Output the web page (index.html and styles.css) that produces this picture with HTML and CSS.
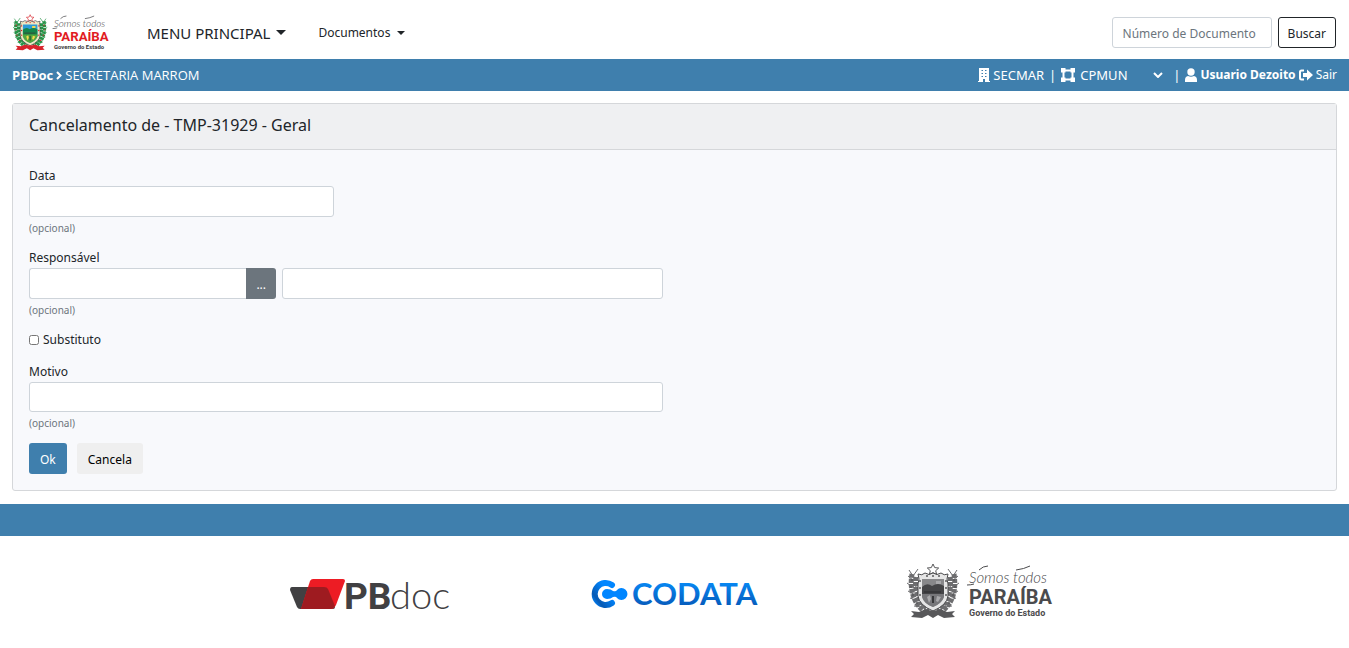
FILE: index.html
```html
<!DOCTYPE html>
<html lang="pt-BR">
<head>
  <meta charset="UTF-8">
  <title>PBDoc - Cancelamento</title>
  <meta name="viewport" content="width=device-width, initial-scale=1.0">
  <link rel="stylesheet" href="styles.css">
</head>
<body>
  <!-- shared logo drawing, coloured by the class of the svg that uses it -->
  <svg class="defs" width="0" height="0" aria-hidden="true">
    <symbol id="paraiba" viewBox="0 0 144 56" overflow="visible">
      <g class="leaf" fill="none" stroke-width="5" stroke-dasharray="4 1">
        <path d="M5 11C3 22 4 39 18 49M9 14C7 24 11 39 22 47M47 11c2 13 1 28-13 38M43 14c2 12-2 27-13 33"/>
      </g>
      <g class="leaf-line" fill="none" stroke-width="1">
        <path d="M2 7l4 6 5-7M1 13l6 5 5-5M0 20l7 5 6-5M1 28l7 4 4-5M3 35l8 3 3-6M7 43l8 1 2-6M50 7l-4 6-5-7M51 13l-6 5-5-5M52 20l-7 5-6-5M51 28l-7 4-4-5M49 35l-8 3-3-6M45 43l-8 1-2-6"/>
      </g>
      <g class="gem"><circle cx="5" cy="17" r="1"/><circle cx="4" cy="24" r="1"/><circle cx="6" cy="32" r="1"/><circle cx="10" cy="40" r="1"/><circle cx="47" cy="17" r="1"/><circle cx="48" cy="24" r="1"/><circle cx="46" cy="32" r="1"/><circle cx="42" cy="40" r="1"/></g>
      <path class="star" fill="none" stroke-width="1" d="M26 1l1.700 3.600 4 .400-3 2.700 1 3.900-3.700-2-3.700 2 1-3.900-3-2.700 4-.400z"/>
      <path class="rim" d="M11 11q4 2 7-1 4 3 8 0 4 3 8 0 3 3 7 1-2 5 0 10v12q-1 9-15 15-14-6-15-15V21q2-5 0-10z" stroke-width="1"/>
      <path class="sky" d="M15 16h22v17q-1 7-11 11-10-4-11-11z"/>
      <path class="hill" d="M15 24q5-5 10-1 6-4 12 0v11H15z"/>
      <path class="land" d="M15 31h22v3q-2 6-11 10-9-3-11-10z"/>
      <path class="sun" d="M29 18h5v3h-5zM20 34l3-2 1 4-2 4zM30 33l4 1-3 5-2-1z"/>
      <path class="dark" d="M17 28h17v2H17zM25 33h2v7h-2z"/>
      <g class="gem"><circle cx="13" cy="18" r="1"/><circle cx="13" cy="25" r="1"/><circle cx="13" cy="32" r="1"/><circle cx="39" cy="18" r="1"/><circle cx="39" cy="25" r="1"/><circle cx="39" cy="32" r="1"/><circle cx="20" cy="13" r="1"/><circle cx="26" cy="13" r="1"/><circle cx="32" cy="13" r="1"/></g>
      <path class="ribbon" d="M4 48l8 1 7-3q7 3 14 0l7 3 8-1-3 3 3 3-11 1-6-3-5 3-5-3-6 3-11-1 3-3z"/>
      <text class="logo-script" x="62" y="20">Somos todos</text>
      <path class="flourish" fill="none" d="M60 22q4 0 7-1M72 7q4-4 9-4M109 7q8-1 14-4"/>
      <text class="logo-name" x="62" y="41">PARAÍBA</text>
      <text class="logo-sub" x="62" y="53">Governo do Estado</text>
    </symbol>
  </svg>

  <nav class="navbar">
    <a href="#" class="brand"><svg class="logo logo-color" viewBox="0 0 144 56" role="img" aria-label="Governo da Paraíba"><use href="#paraiba"/></svg></a>
    <button type="button" class="menu-main">MENU PRINCIPAL<span class="caret"></span></button>
    <button type="button" class="menu-item">Documentos<span class="caret"></span></button>
    <form class="search">
      <input type="text" class="form-control" placeholder="Número de Documento" aria-label="Número de Documento">
      <button type="button" class="btn btn-outline">Buscar</button>
    </form>
  </nav>

  <div class="topbar">
    <div class="path">
      <strong>PBDoc</strong>
      <svg class="icon-angle" viewBox="0 0 6 9"><path d="M1 1l3.500 3.500L1 8" fill="none" stroke="currentColor" stroke-width="2"/></svg>
      <span>SECRETARIA MARROM</span>
    </div>
    <div class="session">
      <svg class="icon-building" viewBox="0 0 12 14"><path fill="currentColor" fill-rule="evenodd" d="M1 0h10v13h1v1H7v-3H5v3H0v-1h1zM3.500 2v1h1.500V2zm3.500 0v1h1.500V2zM3.500 5v1h1.500V5zm3.500 0v1h1.500V5zM3.500 8v1h1.500V8zm3.500 0v1h1.500V8z"/></svg>
      <span class="unit">SECMAR</span>
      <span class="bar">|</span>
      <svg class="icon-vector" viewBox="0 0 14 14"><path fill="none" stroke="currentColor" stroke-width="2" d="M2.500 2.500h9v9h-9z"/><path fill="currentColor" d="M0 0h4.500v4.500H0zM9.500 0H14v4.500H9.500zM0 9.500h4.500V14H0zM9.500 9.500H14V14H9.500z"/></svg>
      <span class="select-wrap">
        <select class="lotacao" aria-label="Lotação"><option>CPMUN</option></select>
        <svg class="icon-chevron" viewBox="0 0 10 6"><path d="M1 1l4 4 4-4" fill="none" stroke="currentColor" stroke-width="2"/></svg>
      </span>
      <span class="bar">|</span>
      <svg class="icon-user" viewBox="0 0 12 14"><circle cx="6" cy="4" r="3.700" fill="currentColor"/><path fill="currentColor" d="M3 8q3 1.500 6 0 3 .500 3 4v2H0v-2q0-3.500 3-4z"/></svg>
      <strong class="user">Usuario Dezoito</strong>
      <a href="#" class="logout"><svg class="icon-exit" viewBox="0 0 14 12"><path d="M5 1.500H2.500q-1.500 0-1.500 1.500v6q0 1.500 1.500 1.500H5" fill="none" stroke="currentColor" stroke-width="2"/><path fill="currentColor" d="M4 4h4V.500l6 5.500-6 5.500V8H4z"/></svg>Sair</a>
    </div>
  </div>

  <main class="content">
    <div class="card">
      <div class="card-header"><h5>Cancelamento de - TMP-31929 - Geral</h5></div>
      <form class="card-body">
        <div class="form-group col-3">
          <label for="data">Data</label>
          <input type="text" id="data" class="form-control">
          <small>(opcional)</small>
        </div>
        <div class="form-group col-6">
          <label for="responsavel">Responsável</label>
          <div class="person">
            <div class="input-group">
              <input type="text" id="responsavel" class="form-control">
              <button type="button" class="btn btn-secondary" aria-label="Procurar responsável">...</button>
            </div>
            <input type="text" class="form-control person-name" aria-label="Nome do responsável">
          </div>
          <small>(opcional)</small>
        </div>
        <div class="form-check col-6">
          <input type="checkbox" id="substituto">
          <label for="substituto">Substituto</label>
        </div>
        <div class="form-group col-6">
          <label for="motivo">Motivo</label>
          <input type="text" id="motivo" class="form-control reason">
          <small>(opcional)</small>
        </div>
        <div class="actions">
          <button type="button" class="btn btn-primary">Ok</button>
          <button type="button" class="btn btn-light">Cancela</button>
        </div>
      </form>
    </div>
  </main>

  <footer>
    <div class="footer-bar"></div>
    <div class="footer-logos">
      <svg class="logo-pbdoc" viewBox="0 0 162 36" role="img" aria-label="PBdoc">
        <path fill="#414042" d="M2 9h32q3 0 4 2l7 18q0 2-2 2H10q-2 0-3-2L0 12q0-3 2-3z"/>
        <path fill="#ed1c24" d="M23 1h30q2 0 2 2L46 27q-2 4-5 4H11L20 3q1-2 3-2z"/>
        <path fill="#9e1b20" d="M18 9h16q3 0 4 2l7 17q-2 3-4 3H11z"/>
        <text class="pb" x="54" y="31">PB</text>
        <text class="doc" x="100" y="31">doc</text>
      </svg>
      <svg class="logo-codata" viewBox="0 0 168 36" role="img" aria-label="CODATA">
        <defs>
          <linearGradient id="blue" x1="0" y1="0" x2="0" y2="1"><stop offset=".2" stop-color="#0789f5"/><stop offset="1" stop-color="#0650ad"/></linearGradient>
          <linearGradient id="ring" x1="1" y1="0" x2="0" y2="1"><stop offset=".3" stop-color="#0086ff"/><stop offset=".8" stop-color="#0759b3"/><stop offset="1" stop-color="#0086ff"/></linearGradient>
        </defs>
        <path d="M21 7a11 11 0 1 0 0 18" fill="none" stroke="url(#ring)" stroke-width="6" stroke-linecap="round"/>
        <path fill="#0086ff" d="M16 11q4 0 6 2 3 1 4-1a6 6 0 1 1 0 8q-1-2-4-1-2 2-6 2a5 5 0 0 1 0-10z"/>
        <text class="codata" x="41" y="27" fill="url(#blue)">CODATA</text>
      </svg>
      <svg class="logo logo-gray" viewBox="0 0 144 56" role="img" aria-label="Governo da Paraíba"><use href="#paraiba"/></svg>
    </div>
  </footer>
</body>
</html>
```

FILE: styles.css
```css
* {
  box-sizing: border-box;
}
body {
  margin: 0;
  background: #fff;
  color: #212529;
  font-family: "Noto Sans", "Open Sans", sans-serif;
  font-size: 12px;
  line-height: 20px;
}
button, input, select {
  font: inherit;
  color: inherit;
}
a {
  color: inherit;
  text-decoration: none;
}
svg {
  flex: none;
}
.defs {
  position: absolute;
}

/* navbar */
.navbar {
  display: flex;
  align-items: center;
  padding: 14px 13px 8px;
  height: 59px;
}
.brand {
  display: flex;
  margin-right: 39px;
}
.menu-main, .menu-item {
  display: flex;
  align-items: center;
  padding: 0;
  border: 0;
  background: transparent;
}
.menu-main {
  gap: 6px;
  margin-right: 32px;
  font-size: 15px;
}
.menu-item {
  gap: 7px;
}
.caret {
  border: 4px solid transparent;
  border-top-color: currentColor;
  border-bottom: 0;
}
.menu-main .caret {
  border-width: 5px 5px 0;
}
.search {
  display: flex;
  gap: 6px;
  margin-left: auto;
}
.search .form-control {
  width: 160px;
}

/* controls */
.form-control {
  width: 100%;
  height: 31px;
  padding: 5px 10px 4px;
  border: 1px solid #ced4da;
  border-radius: 3px;
  background: #fff;
}
.form-control::placeholder {
  color: #6c757d;
}
.btn {
  height: 31px;
  padding: 6px 9px 4px;
  border: 1px solid transparent;
  border-radius: 3px;
}
.btn-outline {
  border-color: #212529;
  background: #fff;
}
.btn-primary {
  background: #3f7fad;
  color: #fff;
}
.btn-light {
  background: #efefef;
  color: #000;
}
.btn-secondary {
  background: #6c757d;
  color: #fff;
}
.actions .btn {
  padding-left: 10px;
  padding-right: 10px;
}

/* blue bar */
.topbar {
  display: flex;
  align-items: center;
  justify-content: space-between;
  height: 32px;
  padding: 0 12px;
  background: #3f7fad;
  color: #fff;
  font-size: 13px;
}
.path, .session {
  display: flex;
  align-items: center;
  gap: 3px;
}
.path {
  font-family: "Open Sans", sans-serif;
}
.icon-angle {
  width: 6px;
  height: 9px;
}
.icon-building, .icon-user {
  width: 12px;
  height: 14px;
}
.icon-vector {
  width: 14px;
  height: 14px;
}
.icon-exit {
  width: 14px;
  height: 12px;
}
.bar {
  padding: 0 2px;
}
.select-wrap {
  display: flex;
  align-items: center;
  width: 90px;
  padding-left: 2px;
}
.lotacao {
  flex: 1;
  min-width: 0;
  padding: 0;
  border: 0;
  background: transparent;
  appearance: none;
}
.icon-chevron {
  width: 10px;
  height: 6px;
  margin-right: 5px;
  pointer-events: none;
}
.logout {
  display: flex;
  align-items: center;
  gap: 3px;
}
.user, .logout {
  font-size: 12px;
}

/* card */
.content {
  padding: 12px 12px 13px;
}
.card {
  border: 1px solid #d5d7da;
  border-radius: 3px;
  background: #f8f9fc;
}
.card-header {
  padding: 9px 16px 12px;
  border-bottom: 1px solid #d5d7da;
  background: #eff0f2;
}
.card-header h5 {
  margin: 0;
  font-size: 16px;
  font-weight: 400;
  line-height: 24px;
}
.card-body {
  display: grid;
  grid-template-columns: repeat(12, 1fr);
  gap: 12px 24px;
  padding: 16px;
}
.col-3 {
  grid-column: 1 / span 3;
}
.col-6 {
  grid-column: 1 / span 6;
}
.form-group label, .form-group small {
  display: block;
}
.form-group small {
  margin-top: 3px;
  color: #6c757d;
  font-size: 10px;
  line-height: 16px;
}
.form-control.reason {
  height: 30px;
}
.person, .input-group {
  display: flex;
}
.person {
  gap: 6px;
}
.input-group {
  flex: 0 0 39%;
}
.input-group .form-control {
  flex: 1;
  min-width: 0;
  border-right: 0;
  border-radius: 3px 0 0 3px;
}
.input-group .btn {
  border-radius: 0 3px 3px 0;
}
.person-name {
  flex: 1;
  min-width: 0;
}
.form-check {
  display: flex;
  align-items: center;
  gap: 4px;
}
.form-check input {
  width: 10px;
  height: 10px;
  margin: 0;
}
.actions {
  grid-column: 1 / -1;
  display: flex;
  gap: 10px;
}

/* footer */
.footer-bar {
  height: 32px;
  background: #3f7fad;
}
.footer-logos {
  display: grid;
  grid-template-columns: repeat(3, 304px);
  justify-content: center;
  align-items: center;
  justify-items: center;
  padding: 27px 0;
}
.logo-pbdoc, .logo-codata {
  height: 36px;
  margin-top: 10px;
}
.logo-pbdoc {
  width: 162px;
}
.logo-codata {
  width: 168px;
}
.pb {
  fill: #414042;
  font: 700 37px Roboto, sans-serif;
}
.doc {
  fill: #414042;
  font: 300 38px Lato, sans-serif;
}
.codata {
  font: 700 31px Lato, sans-serif;
}

/* state logo */
.logo {
  overflow: visible;
}
.logo-script {
  font: italic 300 15px Lato, sans-serif;
}
.logo-name {
  font: 700 20px Roboto, sans-serif;
}
.logo-sub {
  font: 700 9px Roboto, sans-serif;
}
.logo-color {
  width: 95px;
  height: 37px;
  --leaf: #279348;
  --ribbon: #d8232b;
  --rim: #eee9c4;
  --sky: #2c9bd8;
  --hill: #15864b;
  --land: #54a63c;
  --sun: #f5d94e;
  --dark: #31583a;
  --name: #e11b22;
  --text: #3c3c3e;
}
.logo-gray {
  width: 144px;
  height: 56px;
  --leaf: #6d6d6f;
  --ribbon: #58585a;
  --rim: #e6e6e6;
  --sky: #88888a;
  --hill: #454547;
  --land: #77777a;
  --sun: #a9a9ab;
  --dark: #38383a;
  --name: #4b4b4d;
  --text: #4b4b4d;
}
.leaf, .leaf-line {
  stroke: var(--leaf);
}
.star {
  stroke: var(--ribbon);
}
.rim {
  fill: var(--rim);
  stroke: var(--text);
}
.sky {
  fill: var(--sky);
}
.hill {
  fill: var(--hill);
}
.land {
  fill: var(--land);
}
.sun {
  fill: var(--sun);
}
.dark {
  fill: var(--dark);
}
.gem, .ribbon {
  fill: var(--ribbon);
}
.logo-name {
  fill: var(--name);
}
.logo-script, .logo-sub {
  fill: var(--text);
}
.flourish {
  stroke: var(--text);
}
```
